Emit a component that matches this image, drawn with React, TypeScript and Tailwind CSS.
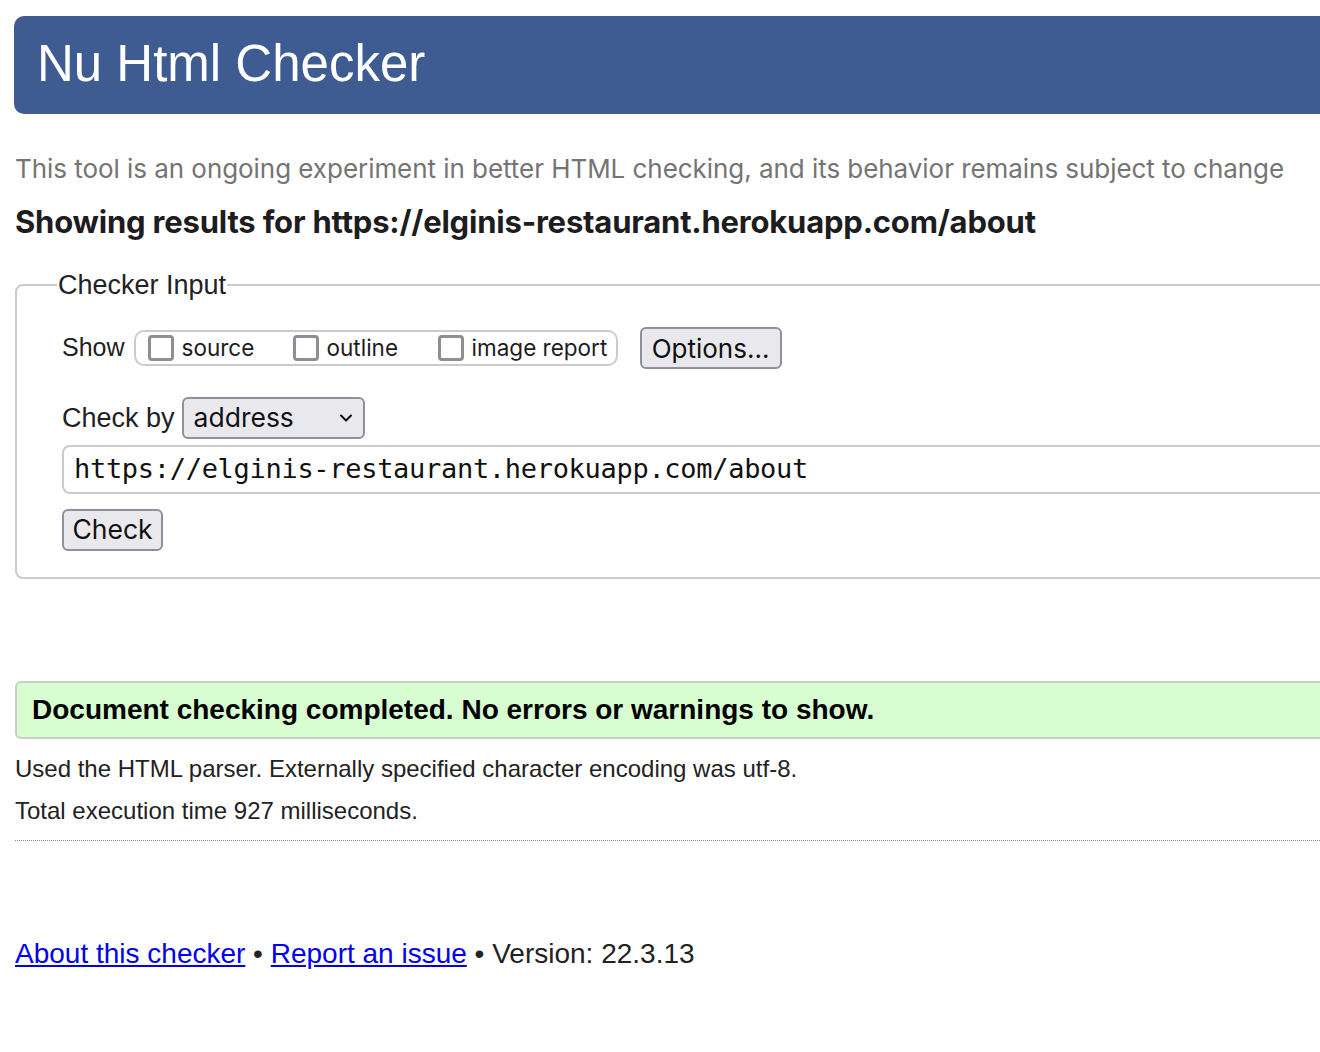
import React from "react"

const sans = "font-['Liberation_Sans',Arial,sans-serif]"
const ui = "font-['Inter','Noto_Sans',sans-serif]"

function Box({ label }: { label: string }) {
  return (
    <span className="flex items-center gap-[8px]">
      <span className="box-border block h-[26px] w-[26px] rounded-[4px] border-[3px] border-[#8e8e96] bg-white" />
      <span className={`${ui} text-[22.5px] text-[#1c1c1e]`}>{label}</span>
    </span>
  )
}

export default function App() {
  return (
    <div className="min-h-[1052px] w-full overflow-hidden bg-white">
      <div className="w-[1400px] pt-[16px]">
        {/* title bar */}
        <div className="ml-[14px] flex h-[98px] items-center rounded-l-[10px] bg-[#3e5c92] pl-[23px]">
          <h1 className={`${sans} -mt-[4px] text-[51px] leading-none text-white`}>Nu Html Checker</h1>
        </div>

        <div className="pl-[15px]">
          <p className={`${ui} mt-[40px] text-[26px] leading-[30px] tracking-[-0.05px] text-[#747474]`}>
            This tool is an ongoing experiment in better HTML checking, and its behavior remains subject to change
          </p>
          <h2 className={`${ui} mt-[20px] text-[31px] font-bold leading-[36px] tracking-[-0.2px] text-[#1d1d1f]`}>
            Showing results for https://elginis-restaurant.herokuapp.com/about
          </h2>

          <fieldset className="mt-[31px] rounded-[8px] border-2 border-[#cbcbcb] pb-[26px] pl-[45px] pr-0">
            <legend className={`${sans} -ml-[5px] px-[1px] text-[27px] leading-[28px] text-[#222]`}>Checker Input</legend>

            <div className="mt-[28px] flex items-center">
              <span className={`${sans} text-[25px] text-[#222]`}>Show</span>
              <div className="ml-[9px] flex h-[36px] w-[484px] items-center rounded-[10px] border-2 border-[#cbcbcb] pl-[12px]">
                <span className="w-[145px]"><Box label="source" /></span>
                <span className="w-[145px]"><Box label="outline" /></span>
                <Box label="image report" />
              </div>
              <button
                className={`${ui} ml-[22px] h-[42px] w-[142px] rounded-[6px] border-2 border-[#8f8f9d] bg-[#e9e9ed] text-[26px] text-[#111]`}
              >
                Options...
              </button>
            </div>

            <div className="mt-[28px] flex items-center">
              <span className={`${sans} text-[27px] text-[#222]`}>Check by</span>
              <div className="ml-[7px] flex h-[42px] w-[183px] items-center justify-between rounded-[6px] border-2 border-[#8f8f9d] bg-[#e9e9ed] pl-[10px] pr-[10px]">
                <span className={`${ui} text-[26.5px] text-[#111]`}>address</span>
                <svg width="14" height="10" viewBox="0 0 14 10" fill="none">
                  <path d="M2 2.5 7 7.5 12 2.5" stroke="#111" strokeWidth="2" strokeLinecap="round" strokeLinejoin="round" />
                </svg>
              </div>
            </div>

            <div className="mt-[6px] flex h-[49px] items-center rounded-l-[8px] border-2 border-r-0 border-[#cbcbcb] pl-[10px]">
              <span className="font-['DejaVu_Sans_Mono',monospace] text-[27px] tracking-[-0.3px] text-[#111]">
                https://elginis-restaurant.herokuapp.com/about
              </span>
            </div>

            <button
              className={`${ui} mt-[15px] flex h-[42px] w-[101px] items-center justify-center rounded-[6px] border-2 border-[#8f8f9d] bg-[#e9e9ed] text-[26.5px] text-[#111]`}
            >
              Check
            </button>
          </fieldset>

          {/* result */}
          <div className="mt-[102px] flex h-[58px] items-center rounded-l-[6px] border-2 border-r-0 border-[#cbcbcb] bg-[#d8fdd0] pl-[15px]">
            <span className={`${sans} text-[28px] font-bold text-black`}>
              Document checking completed. No errors or warnings to show.
            </span>
          </div>
          <p className={`${sans} mt-[16px] text-[24px] leading-[28px] text-[#222]`}>
            Used the HTML parser. Externally specified character encoding was utf-8.
          </p>
          <p className={`${sans} mt-[14px] text-[24px] leading-[28px] text-[#222]`}>
            Total execution time 927 milliseconds.
          </p>
          <hr className="mt-[15px] border-0 border-t border-dotted border-[#888]" />

          <p className={`${sans} mt-[97px] text-[28px] leading-[32px] text-[#222]`}>
            <a href="#" className="text-[#0000ee] underline">About this checker</a> •{" "}
            <a href="#" className="text-[#0000ee] underline">Report an issue</a> • Version: 22.3.13
          </p>
        </div>
      </div>
    </div>
  )
}
